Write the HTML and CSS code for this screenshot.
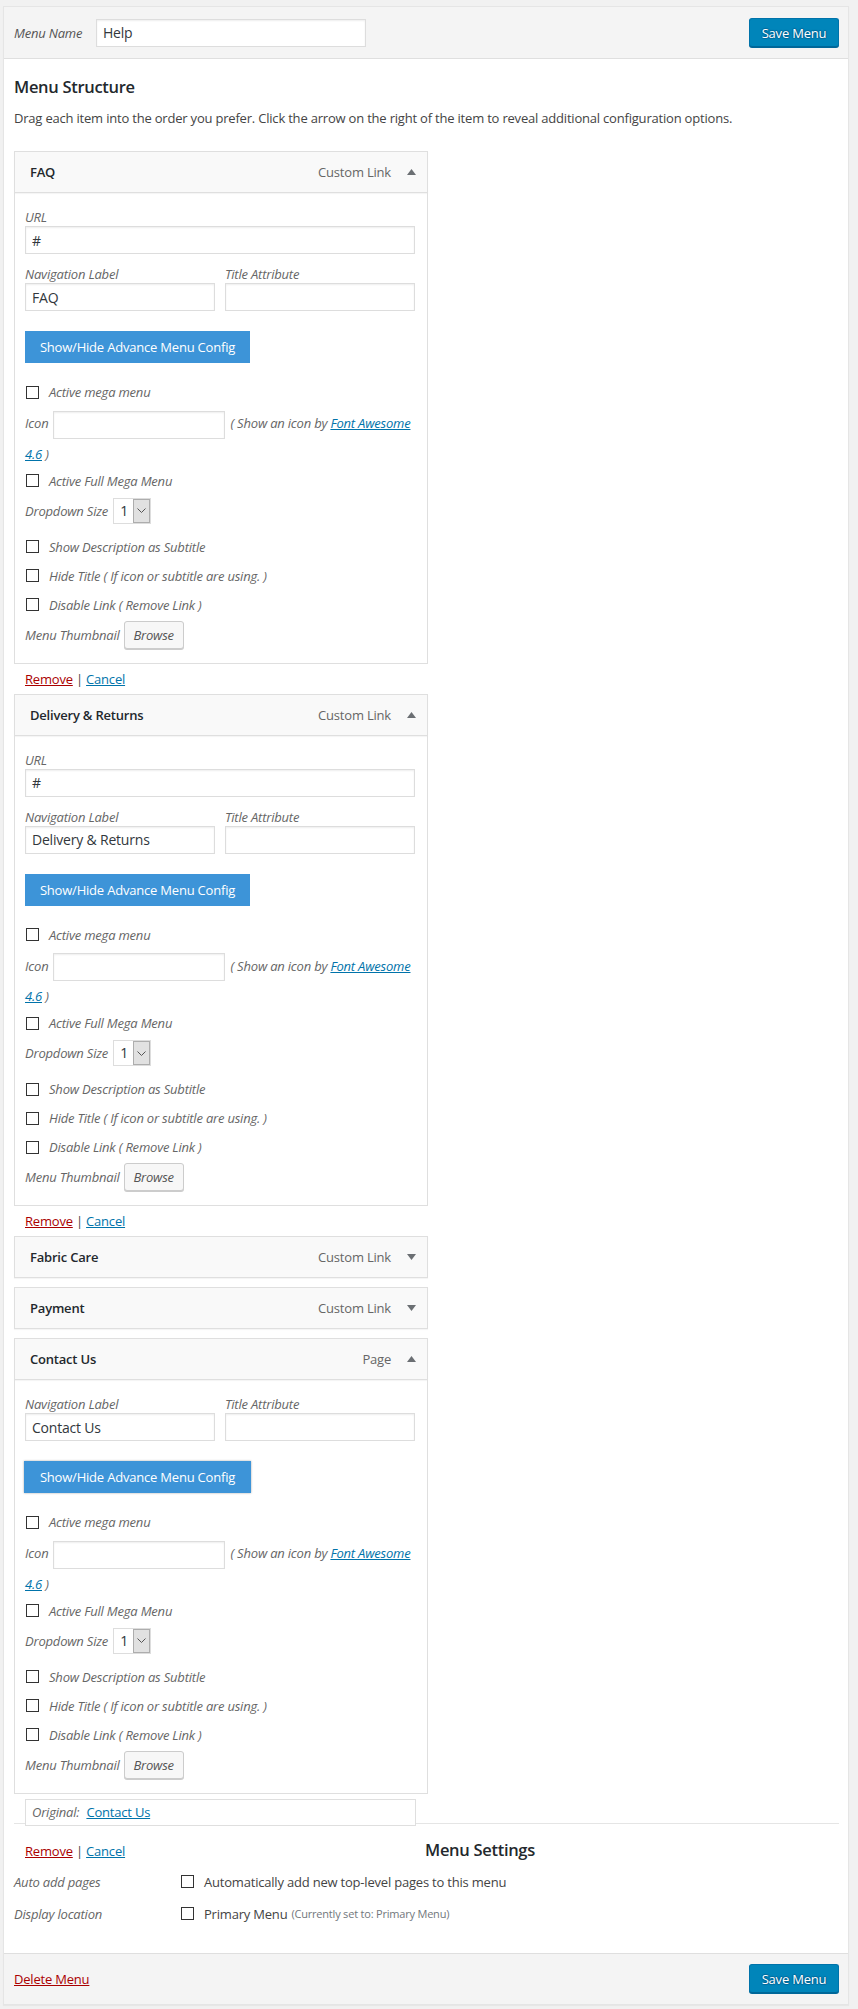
FILE: index.html
```html
<!DOCTYPE html>
<html lang="en">
<head>
<meta charset="utf-8">
<title>Edit Menu</title>
<link rel="stylesheet" href="styles.css">
</head>
<body>
<div class="menu-edit">
  <div class="nav-header">
    <label class="name-label">Menu Name</label>
    <input class="text-input name-input" type="text" value="Help">
    <button class="btn-primary">Save Menu</button>
  </div>

  <div class="nav-body">
    <h3 class="section-title">Menu Structure</h3>
    <p class="drag-instr">Drag each item into the order you prefer. Click the arrow on the right of the item to reveal additional configuration options.</p>

    <ul class="menu">
      <!-- FAQ -->
      <li class="menu-item">
        <div class="item-bar">
          <span class="item-title">FAQ</span>
          <span class="item-type">Custom Link</span>
          <svg class="arrow" viewBox="0 0 9 6" width="9" height="6"><polygon points="0,6 4.5,0 9,6" fill="#6b6f73"/></svg>
        </div>
        <div class="item-settings">
          <div class="field url-field">
            <label class="fld-label">URL</label>
            <input class="text-input full" type="text" value="#">
          </div>
          <div class="field-row">
            <div class="field"><label class="fld-label">Navigation Label</label><input class="text-input full" type="text" value="FAQ"></div>
            <div class="field"><label class="fld-label">Title Attribute</label><input class="text-input full" type="text" value=""></div>
          </div>
          <button class="btn-adv">Show/Hide Advance Menu Config</button>
          <label class="check row-mega"><input type="checkbox" class="cb">Active mega menu</label>
          <p class="icon-row"><span class="lbl">Icon</span><input class="text-input icon-input" type="text"><span class="hint">( Show an icon by <a href="#">Font Awesome</a></span> <a href="#">4.6</a> )</p>
          <label class="check row-full"><input type="checkbox" class="cb">Active Full Mega Menu</label>
          <div class="dd-row">Dropdown Size<span class="select"><span class="val">1</span><span class="caret"><svg viewBox="0 0 9 5" width="9" height="5"><polyline points="0.5,0.5 4.5,4.5 8.5,0.5" fill="none" stroke="#555" stroke-width="1"/></svg></span></span></div>
          <label class="check row-desc"><input type="checkbox" class="cb">Show Description as Subtitle</label>
          <label class="check row-gap"><input type="checkbox" class="cb">Hide Title ( If icon or subtitle are using. )</label>
          <label class="check row-gap"><input type="checkbox" class="cb">Disable Link ( Remove Link )</label>
          <div class="thumb-row">Menu Thumbnail<button class="btn-browse">Browse</button></div>
        </div>
        <div class="item-actions"><a href="#" class="remove">Remove</a> | <a href="#" class="cancel">Cancel</a></div>
      </li>

      <!-- Delivery & Returns -->
      <li class="menu-item">
        <div class="item-bar">
          <span class="item-title">Delivery &amp; Returns</span>
          <span class="item-type">Custom Link</span>
          <svg class="arrow" viewBox="0 0 9 6" width="9" height="6"><polygon points="0,6 4.5,0 9,6" fill="#6b6f73"/></svg>
        </div>
        <div class="item-settings">
          <div class="field url-field">
            <label class="fld-label">URL</label>
            <input class="text-input full" type="text" value="#">
          </div>
          <div class="field-row">
            <div class="field"><label class="fld-label">Navigation Label</label><input class="text-input full" type="text" value="Delivery &amp; Returns"></div>
            <div class="field"><label class="fld-label">Title Attribute</label><input class="text-input full" type="text" value=""></div>
          </div>
          <button class="btn-adv">Show/Hide Advance Menu Config</button>
          <label class="check row-mega"><input type="checkbox" class="cb">Active mega menu</label>
          <p class="icon-row"><span class="lbl">Icon</span><input class="text-input icon-input" type="text"><span class="hint">( Show an icon by <a href="#">Font Awesome</a></span> <a href="#">4.6</a> )</p>
          <label class="check row-full"><input type="checkbox" class="cb">Active Full Mega Menu</label>
          <div class="dd-row">Dropdown Size<span class="select"><span class="val">1</span><span class="caret"><svg viewBox="0 0 9 5" width="9" height="5"><polyline points="0.5,0.5 4.5,4.5 8.5,0.5" fill="none" stroke="#555" stroke-width="1"/></svg></span></span></div>
          <label class="check row-desc"><input type="checkbox" class="cb">Show Description as Subtitle</label>
          <label class="check row-gap"><input type="checkbox" class="cb">Hide Title ( If icon or subtitle are using. )</label>
          <label class="check row-gap"><input type="checkbox" class="cb">Disable Link ( Remove Link )</label>
          <div class="thumb-row">Menu Thumbnail<button class="btn-browse">Browse</button></div>
        </div>
        <div class="item-actions"><a href="#" class="remove">Remove</a> | <a href="#" class="cancel">Cancel</a></div>
      </li>

      <!-- Fabric Care -->
      <li class="menu-item collapsed">
        <div class="item-bar">
          <span class="item-title">Fabric Care</span>
          <span class="item-type">Custom Link</span>
          <svg class="arrow" viewBox="0 0 9 6" width="9" height="6"><polygon points="0,0 9,0 4.5,6" fill="#6b6f73"/></svg>
        </div>
      </li>

      <!-- Payment -->
      <li class="menu-item collapsed">
        <div class="item-bar">
          <span class="item-title">Payment</span>
          <span class="item-type">Custom Link</span>
          <svg class="arrow" viewBox="0 0 9 6" width="9" height="6"><polygon points="0,0 9,0 4.5,6" fill="#6b6f73"/></svg>
        </div>
      </li>

      <!-- Contact Us -->
      <li class="menu-item">
        <div class="item-bar">
          <span class="item-title">Contact Us</span>
          <span class="item-type">Page</span>
          <svg class="arrow" viewBox="0 0 9 6" width="9" height="6"><polygon points="0,6 4.5,0 9,6" fill="#6b6f73"/></svg>
        </div>
        <div class="item-settings">
          <div class="field-row">
            <div class="field"><label class="fld-label">Navigation Label</label><input class="text-input full" type="text" value="Contact Us"></div>
            <div class="field"><label class="fld-label">Title Attribute</label><input class="text-input full" type="text" value=""></div>
          </div>
          <button class="btn-adv is-hover">Show/Hide Advance Menu Config</button>
          <label class="check row-mega"><input type="checkbox" class="cb">Active mega menu</label>
          <p class="icon-row"><span class="lbl">Icon</span><input class="text-input icon-input" type="text"><span class="hint">( Show an icon by <a href="#">Font Awesome</a></span> <a href="#">4.6</a> )</p>
          <label class="check row-full"><input type="checkbox" class="cb">Active Full Mega Menu</label>
          <div class="dd-row">Dropdown Size<span class="select"><span class="val">1</span><span class="caret"><svg viewBox="0 0 9 5" width="9" height="5"><polyline points="0.5,0.5 4.5,4.5 8.5,0.5" fill="none" stroke="#555" stroke-width="1"/></svg></span></span></div>
          <label class="check row-desc"><input type="checkbox" class="cb">Show Description as Subtitle</label>
          <label class="check row-gap"><input type="checkbox" class="cb">Hide Title ( If icon or subtitle are using. )</label>
          <label class="check row-gap"><input type="checkbox" class="cb">Disable Link ( Remove Link )</label>
          <div class="thumb-row">Menu Thumbnail<button class="btn-browse">Browse</button></div>
        </div>
        <div class="original">Original:<a href="#">Contact Us</a></div>
      </li>
    </ul>

    <div class="menu-settings">
      <div class="settings-head">
        <div class="item-actions inline"><a href="#" class="remove">Remove</a> | <a href="#" class="cancel">Cancel</a></div>
        <h3 class="section-title">Menu Settings</h3>
      </div>
      <div class="settings-row first">
        <span class="set-label">Auto add pages</span>
        <label class="set-input"><input type="checkbox" class="cb">Automatically add new top-level pages to this menu</label>
      </div>
      <div class="settings-row">
        <span class="set-label">Display location</span>
        <label class="set-input"><input type="checkbox" class="cb">Primary Menu<span class="current-loc">(Currently set to: Primary Menu)</span></label>
      </div>
    </div>
  </div>

  <div class="nav-footer">
    <a href="#" class="delete">Delete Menu</a>
    <button class="btn-primary">Save Menu</button>
  </div>
</div>
</body>
</html>
```

FILE: styles.css
```css
* { box-sizing: border-box; }

body {
  margin: 0;
  background: #f1f1f1;
  font-family: "Open Sans", "Noto Sans", sans-serif;
  font-size: 13px;
  letter-spacing: -0.2px;
  color: #444;
}

input, button {
  font-family: inherit;
  letter-spacing: inherit;
}

a { color: #0073aa; }

.menu-edit {
  margin: 6px 9px 5px 3px;
  border: 1px solid #e5e5e5;
  background: #fff;
  box-shadow: 0 1px 1px rgba(0, 0, 0, 0.04);
}

/* header */
.nav-header {
  display: flex;
  align-items: center;
  height: 52px;
  padding: 0 9px 0 10px;
  background: #f4f4f4;
  border-bottom: 1px solid #dfdfdf;
}

.name-label {
  width: 82px;
  font-style: italic;
  color: #555;
}

.text-input {
  height: 28px;
  border: 1px solid #ddd;
  box-shadow: inset 0 1px 2px rgba(0, 0, 0, 0.07);
  background: #fff;
  padding: 0 6px;
  font-size: 14px;
  color: #32373c;
  margin: 0;
}

.name-input { width: 270px; }

.btn-primary {
  margin-left: auto;
  width: 90px;
  height: 29px;
  padding: 0;
  border: 1px solid #0073aa;
  border-bottom-color: #006799;
  border-radius: 3px;
  background: #0085ba;
  box-shadow: 0 1px 0 #006799;
  color: #fff;
  font-size: 13px;
  text-shadow: 0 -1px 1px #006799, 1px 0 1px #006799, 0 1px 1px #006799, -1px 0 1px #006799;
}

/* body */
.nav-body {
  padding: 16px 9px 29px 10px;
}

.section-title {
  margin: 0;
  font-size: 16.5px;
  line-height: 24px;
  letter-spacing: -0.3px;
  font-weight: 600;
  color: #23282d;
}

.drag-instr {
  margin: 9px 0 0;
  line-height: 20px;
}

.menu {
  list-style: none;
  margin: 23px 0 0;
  padding: 0;
  width: 414px;
}

.menu-item.collapsed { margin-bottom: 9px; }

.item-bar {
  display: flex;
  align-items: center;
  height: 42px;
  padding: 0 11px 0 15px;
  border: 1px solid #dfdfdf;
  background: #f9f9f9;
  box-shadow: 0 1px 1px rgba(0, 0, 0, 0.04);
}

.item-title {
  flex: 1;
  font-weight: 600;
  color: #23282d;
}

.item-type { color: #666; }

.arrow { margin-left: 16px; }

.item-settings {
  border: 1px solid #dfdfdf;
  border-top: 0;
  padding: 15px 12px 14px 10px;
}

.fld-label {
  display: block;
  font-style: italic;
  color: #666;
  line-height: 18px;
}

.full { display: block; width: 100%; }

.url-field { margin-bottom: 11px; }

.field-row {
  display: grid;
  grid-template-columns: 1fr 1fr;
  gap: 10px;
}

.btn-adv {
  display: block;
  margin-top: 20px;
  width: 225px;
  height: 32px;
  padding: 0;
  border: 0;
  background: #3d94d8;
  color: #fff;
  font-size: 13px;
  white-space: nowrap;
}

.btn-adv.is-hover {
  width: 227px;
  margin-left: -1px;
  box-shadow: 0 0 2px rgba(0, 0, 0, 0.35);
}

.check {
  display: flex;
  align-items: center;
  height: 20px;
  font-style: italic;
  color: #666;
}

.cb {
  appearance: none;
  -webkit-appearance: none;
  flex: none;
  width: 13px;
  height: 13px;
  margin: 0 10px 0 1px;
  border: 1px solid #333;
  background: #fff;
}

.row-mega { margin-top: 19px; }
.row-full { margin-top: 2px; }
.row-desc { margin-top: 13px; }
.row-gap { margin-top: 9px; }

.icon-row {
  margin: 6px 0 0;
  line-height: 30px;
  font-style: italic;
  color: #666;
}

.icon-input {
  display: inline-block;
  width: 172px;
  vertical-align: middle;
  margin: 0 5px 0 5px;
}

.hint { white-space: nowrap; }

.dd-row {
  display: flex;
  align-items: center;
  height: 26px;
  margin-top: 7px;
  font-style: italic;
  color: #666;
}

.select {
  display: flex;
  width: 38px;
  height: 26px;
  margin-left: 5px;
  border: 1px solid #ddd;
  background: #fff;
}

.select .val {
  flex: 1;
  padding-left: 6px;
  line-height: 24px;
  font-style: normal;
  font-size: 14px;
  color: #32373c;
}

.select .caret {
  width: 17px;
  display: flex;
  align-items: center;
  justify-content: center;
  background: #e1e1e1;
  border: 1px solid #adadad;
}

.thumb-row {
  display: flex;
  align-items: center;
  height: 28px;
  margin-top: 6px;
  font-style: italic;
  color: #666;
}

.btn-browse {
  margin-left: 4px;
  width: 60px;
  height: 28px;
  padding: 0;
  border: 1px solid #ccc;
  border-radius: 3px;
  background: #f7f7f7;
  box-shadow: 0 1px 0 #ccc;
  font-size: 13px;
  font-style: italic;
  color: #555;
}

.item-actions {
  height: 30px;
  line-height: 30px;
  padding-left: 11px;
}

.remove { color: #a00; }
.cancel { color: #0073aa; }

.original {
  position: relative;
  z-index: 1;
  margin: 5px 0 0 11px;
  width: 391px;
  height: 27px;
  padding-left: 6px;
  line-height: 25px;
  border: 1px solid #dfdfdf;
  background: #fff;
  font-style: italic;
  color: #666;
}

.original a {
  margin-left: 7px;
  font-style: normal;
}

/* menu settings */
.menu-settings {
  margin-top: -3px;
  border-top: 1px solid #e5e5e5;
}

.settings-head {
  display: grid;
  grid-template-columns: 411px 1fr;
  align-items: baseline;
  padding-top: 14px;
}

.item-actions.inline {
  height: auto;
  line-height: 20px;
}

.settings-row {
  display: flex;
  align-items: center;
  height: 20px;
  margin-top: 12px;
}

.settings-row.first { margin-top: 10px; }

.set-label {
  width: 166px;
  font-style: italic;
  color: #666;
}

.set-input {
  display: flex;
  align-items: center;
  color: #444;
}

.current-loc {
  margin-left: 4px;
  font-size: 11px;
  color: #72777c;
}

/* footer */
.nav-footer {
  display: flex;
  align-items: center;
  height: 51px;
  padding: 0 9px 0 10px;
  background: #f4f4f4;
  border-top: 1px solid #dfdfdf;
}

.delete { color: #a00; }
```
